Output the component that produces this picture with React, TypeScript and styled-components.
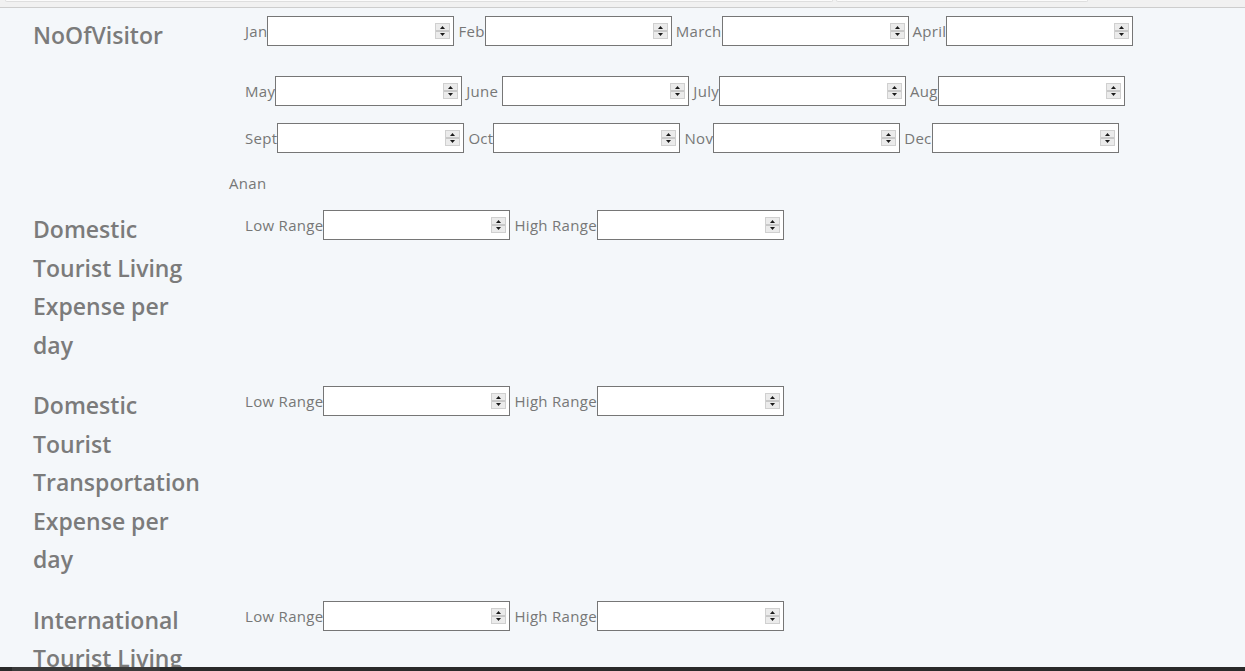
import React from "react";
import styled, { createGlobalStyle } from "styled-components";

const GlobalStyle = createGlobalStyle`
  html, body { margin: 0; padding: 0; }
  body { font-family: "Open Sans", "Liberation Sans", sans-serif; background: #f4f7fa; }
  input[type=number]::-webkit-inner-spin-button,
  input[type=number]::-webkit-outer-spin-button { -webkit-appearance: none; margin: 0; }
  input[type=number] { -moz-appearance: textfield; }
`;

const Page = styled.div`
  height: 100vh;
  display: flex;
  flex-direction: column;
  background: #f4f7fa;
  overflow: hidden;
`;

const TopStrip = styled.div`
  flex: 0 0 7px;
  background: #f1f1f1;
  border-bottom: 1px solid #cdcdcd;
  display: flex;
  align-items: flex-start;
  gap: 3px;
  padding-left: 5px;
`;

const TopTab = styled.div<{ $w: number }>`
  width: ${(p) => p.$w}px;
  height: 1px;
  background: #fbfbfb;
  border-bottom: 1px solid #dedede;
  border-left: 1px solid #dedede;
  border-right: 1px solid #dedede;
  border-radius: 0 0 3px 3px;
`;

const Content = styled.div`
  flex: 1;
  overflow: hidden;
  padding: 8px 0 0 33px;
`;

const BottomBar = styled.div`
  flex: 0 0 4px;
  background: #2a2a2a;
  display: flex;
  padding-left: 12px;
`;

const BottomSeg = styled.div`
  width: 148px;
  background: #3a3a3a;
`;

const Section = styled.section<{ $gap: number }>`
  display: grid;
  grid-template-columns: 196px 1fr;
  margin-bottom: ${(p) => p.$gap}px;
`;

const Heading = styled.h3`
  margin: 0;
  max-width: 172px;
  font-size: 23px;
  font-weight: 600;
  line-height: 38.5px;
  color: #7b7b7b;
`;

const Fields = styled.div`
  display: flex;
  flex-direction: column;
`;

const Row = styled.div<{ $top?: number }>`
  display: flex;
  align-items: center;
  height: 30px;
  padding-left: 16px;
  margin-top: ${(p) => p.$top ?? 0}px;
`;

const Label = styled.label<{ $space?: boolean }>`
  font-size: 15px;
  letter-spacing: 0.3px;
  color: #777;
  white-space: nowrap;
  margin-right: ${(p) => (p.$space ? 4 : 0)}px;
`;

const InputBox = styled.div`
  box-sizing: border-box;
  width: 187px;
  height: 30px;
  border: 1px solid #767676;
  background: #fff;
  display: flex;
  align-items: center;
  margin-right: 4px;
  padding-right: 3px;
`;

const NumInput = styled.input`
  flex: 1;
  min-width: 0;
  height: 100%;
  border: none;
  outline: none;
  background: transparent;
  padding: 0 4px;
  font: inherit;
  font-size: 14px;
`;

const Note = styled.div`
  font-size: 15px;
  letter-spacing: 0.3px;
  color: #777;
  line-height: 20px;
  margin-top: 20px;
`;

const Spinner = () => (
  <svg width="15" height="16" viewBox="0 0 15 16" aria-hidden="true">
    <rect x="0.5" y="0.5" width="14" height="15" fill="#ebebeb" stroke="#d0d0d0" />
    <line x1="1" y1="8" x2="14" y2="8" stroke="#a6a6a6" />
    <path d="M5 6 L10 6 L7.5 3 Z" fill="#1a1a1a" />
    <path d="M5 10 L10 10 L7.5 13 Z" fill="#1a1a1a" />
  </svg>
);

const Field = ({ label, space }: { label: string; space?: boolean }) => (
  <>
    <Label $space={space}>{label}</Label>
    <InputBox>
      <NumInput type="number" />
      <Spinner />
    </InputBox>
  </>
);

const monthRows: { top: number; items: [string, boolean?][] }[] = [
  { top: 0, items: [["Jan"], ["Feb"], ["March"], ["April"]] },
  { top: 30, items: [["May"], ["June", true], ["July"], ["Aug"]] },
  { top: 17, items: [["Sept"], ["Oct"], ["Nov"], ["Dec"]] },
];

const rangeSections = [
  "Domestic Tourist Living Expense per day",
  "Domestic Tourist Transportation Expense per day",
  "International Tourist Living Expense per day",
];

export default function App() {
  return (
    <Page>
      <GlobalStyle />
      <TopStrip>
        <TopTab $w={826} />
        <TopTab $w={250} />
      </TopStrip>
      <Content>
        <Section $gap={17}>
          <Heading>NoOfVisitor</Heading>
          <Fields>
            {monthRows.map((r, i) => (
              <Row key={i} $top={r.top}>
                {r.items.map(([m, s]) => (
                  <Field key={m} label={m} space={s} />
                ))}
              </Row>
            ))}
            <Note>Anan</Note>
          </Fields>
        </Section>
        {rangeSections.map((h) => (
          <Section key={h} $gap={22}>
            <Heading>{h}</Heading>
            <Fields>
              <Row>
                <Field label="Low Range" />
                <Field label="High Range" />
              </Row>
            </Fields>
          </Section>
        ))}
      </Content>
      <BottomBar>
        <BottomSeg />
      </BottomBar>
    </Page>
  );
}
